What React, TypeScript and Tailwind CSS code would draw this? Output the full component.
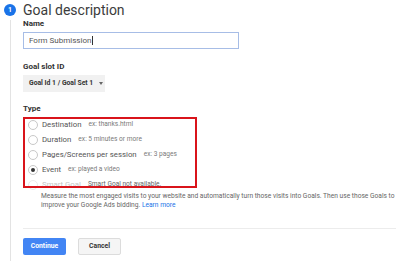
import React from "react";

type GoalType = {
  label: string;
  hint: string;
  checked?: boolean;
  disabled?: boolean;
};

const goalTypes: GoalType[] = [
  { label: "Destination", hint: "ex: thanks.html" },
  { label: "Duration", hint: "ex: 5 minutes or more" },
  { label: "Pages/Screens per session", hint: "ex: 3 pages" },
  { label: "Event", hint: "ex: played a video", checked: true },
  { label: "Smart Goal", hint: "Smart Goal not available.", disabled: true },
];

function Radio({ checked, disabled }: { checked?: boolean; disabled?: boolean }) {
  return (
    <span
      className={`flex h-[10px] w-[10px] items-center justify-center rounded-full border ${
        disabled ? "border-[#ececec]" : "border-[#c8c8c8]"
      }`}
    >
      {checked && <span className="h-[4px] w-[4px] rounded-full bg-[#333]" />}
    </span>
  );
}

export default function App() {
  return (
    <div
      className="flex h-[261px] w-[400px] overflow-hidden bg-white text-[#333]"
      style={{ fontFamily: "Roboto, 'Noto Sans', sans-serif" }}
    >
      {/* step indicator */}
      <div className="flex w-[23px] shrink-0 flex-col">
        <div className="ml-[4px] mt-[4px] flex h-[12px] w-[12px] items-center justify-center rounded-full bg-[#1a73e8] text-[7px] font-bold leading-none text-white">
          1
        </div>
        <div className="ml-[10px] mt-[4px] w-px flex-1 bg-[#e3e3e3]" />
      </div>

      <div className="flex flex-1 flex-col">
        <div className="h-[20px] text-[14px] leading-[20px] text-[#3c3c3c]">Goal description</div>

        <div className="text-[8px] font-bold leading-[8px] text-[#333]">Name</div>
        <div className="mt-[4px] flex h-[17px] w-[216px] items-center border border-[#a7bde6] pl-[5px] text-[8px] text-[#555]">
          Form Submission
          <span className="ml-px h-[9px] w-px bg-[#333]" />
        </div>

        <div className="mt-[14px] text-[8px] font-bold leading-[8px] text-[#333]">Goal slot ID</div>
        <div className="mt-[4px] flex h-[17px] w-[82px] items-center bg-[#f1f1f1] pl-[6px] text-[6.8px] font-bold text-[#333]">
          Goal Id 1 / Goal Set 1
          <span className="ml-[6px] h-0 w-0 border-x-[2.5px] border-t-[3px] border-x-transparent border-t-[#666]" />
        </div>

        <div className="mt-[13px] text-[8px] font-bold leading-[8px] text-[#333]">Type</div>

        <div className="relative mt-[4px]">
          {goalTypes.map((t) => (
            <div key={t.label} className="flex h-[15px] items-center pl-[5px]">
              <Radio checked={t.checked} disabled={t.disabled} />
              <span
                className={`ml-[4px] text-[7.8px] ${t.disabled ? "text-[#c4c4c4]" : "text-[#555]"}`}
              >
                {t.label}
              </span>
              <span className={`ml-[7px] text-[6.6px] ${t.disabled ? "text-[#666]" : "text-[#7a7a7a]"}`}>
                {t.hint}
              </span>
            </div>
          ))}
          {/* annotation box */}
          <div className="pointer-events-none absolute left-0 top-0 h-[71px] w-[174px] border-2 border-[#d9141b]" />
        </div>

        <div className="whitespace-nowrap pl-[18px] text-[6.65px] leading-[9px] text-[#666]">
          Measure the most engaged visits to your website and automatically turn those visits into Goals. Then use
          those Goals to
          <br />
          improve your Google Ads bidding. <span className="text-[#1a73e8]">Learn more</span>
        </div>

        <div className="mt-[18px] h-px w-[373px] bg-[#ececec]" />

        <div className="mt-[9px] flex gap-[12px]">
          <button className="flex h-[17px] w-[43px] items-center justify-center rounded-[2px] bg-[#4285f4] text-[6.8px] font-bold text-white">
            Continue
          </button>
          <button className="flex h-[17px] w-[43px] items-center justify-center rounded-[2px] border border-[#dcdcdc] bg-[#f5f5f5] text-[6.8px] font-bold text-[#333]">
            Cancel
          </button>
        </div>
      </div>
    </div>
  );
}
